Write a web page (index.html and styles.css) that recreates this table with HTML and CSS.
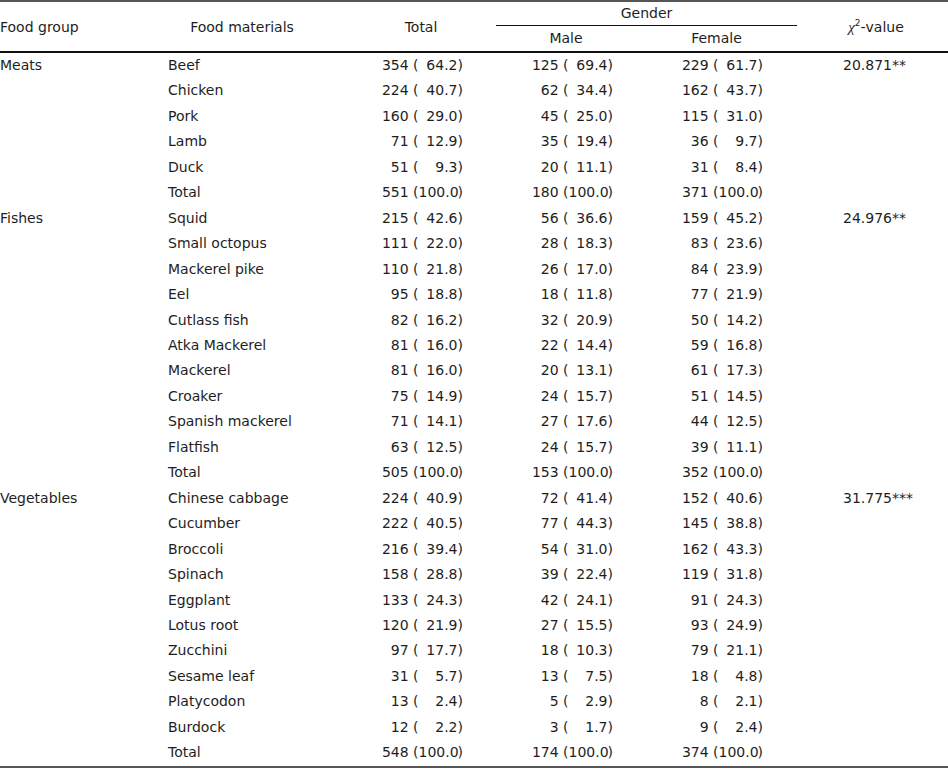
FILE: index.html
```html
<!DOCTYPE html>
<html lang="en">
<head>
<meta charset="utf-8">
<title>Food materials by gender</title>
<link rel="stylesheet" href="styles.css">
</head>
<body>
<table class="tbl">
<colgroup>
<col class="c1"><col class="c2"><col class="c3"><col class="c4"><col class="c5"><col class="c6">
</colgroup>
<thead>
<tr class="h1">
<th rowspan="2" class="h-group">Food group</th>
<th rowspan="2" class="h-mat">Food materials</th>
<th rowspan="2" class="h-total">Total</th>
<th colspan="2" class="h-gender"><div class="gender-line">Gender</div></th>
<th rowspan="2" class="h-chi"><span class="chi">χ</span><sup>2</sup>-value</th>
</tr>
<tr class="h2">
<th class="h-male">Male</th>
<th class="h-female">Female</th>
</tr>
</thead>
<tbody>
<tr><td>Meats</td><td>Beef</td><td class="v t">354 (<span class="p">64.2</span>)</td><td class="v m">125 (<span class="p">69.4</span>)</td><td class="v f">229 (<span class="p">61.7</span>)</td><td class="x">20.871**</td></tr>
<tr><td></td><td>Chicken</td><td class="v t">224 (<span class="p">40.7</span>)</td><td class="v m">62 (<span class="p">34.4</span>)</td><td class="v f">162 (<span class="p">43.7</span>)</td><td></td></tr>
<tr><td></td><td>Pork</td><td class="v t">160 (<span class="p">29.0</span>)</td><td class="v m">45 (<span class="p">25.0</span>)</td><td class="v f">115 (<span class="p">31.0</span>)</td><td></td></tr>
<tr><td></td><td>Lamb</td><td class="v t">71 (<span class="p">12.9</span>)</td><td class="v m">35 (<span class="p">19.4</span>)</td><td class="v f">36 (<span class="p">9.7</span>)</td><td></td></tr>
<tr><td></td><td>Duck</td><td class="v t">51 (<span class="p">9.3</span>)</td><td class="v m">20 (<span class="p">11.1</span>)</td><td class="v f">31 (<span class="p">8.4</span>)</td><td></td></tr>
<tr><td></td><td>Total</td><td class="v t">551 (<span class="p">100.0</span>)</td><td class="v m">180 (<span class="p">100.0</span>)</td><td class="v f">371 (<span class="p">100.0</span>)</td><td></td></tr>

<tr><td>Fishes</td><td>Squid</td><td class="v t">215 (<span class="p">42.6</span>)</td><td class="v m">56 (<span class="p">36.6</span>)</td><td class="v f">159 (<span class="p">45.2</span>)</td><td class="x">24.976**</td></tr>
<tr><td></td><td>Small octopus</td><td class="v t">111 (<span class="p">22.0</span>)</td><td class="v m">28 (<span class="p">18.3</span>)</td><td class="v f">83 (<span class="p">23.6</span>)</td><td></td></tr>
<tr><td></td><td>Mackerel pike</td><td class="v t">110 (<span class="p">21.8</span>)</td><td class="v m">26 (<span class="p">17.0</span>)</td><td class="v f">84 (<span class="p">23.9</span>)</td><td></td></tr>
<tr><td></td><td>Eel</td><td class="v t">95 (<span class="p">18.8</span>)</td><td class="v m">18 (<span class="p">11.8</span>)</td><td class="v f">77 (<span class="p">21.9</span>)</td><td></td></tr>
<tr><td></td><td>Cutlass fish</td><td class="v t">82 (<span class="p">16.2</span>)</td><td class="v m">32 (<span class="p">20.9</span>)</td><td class="v f">50 (<span class="p">14.2</span>)</td><td></td></tr>
<tr><td></td><td>Atka Mackerel</td><td class="v t">81 (<span class="p">16.0</span>)</td><td class="v m">22 (<span class="p">14.4</span>)</td><td class="v f">59 (<span class="p">16.8</span>)</td><td></td></tr>
<tr><td></td><td>Mackerel</td><td class="v t">81 (<span class="p">16.0</span>)</td><td class="v m">20 (<span class="p">13.1</span>)</td><td class="v f">61 (<span class="p">17.3</span>)</td><td></td></tr>
<tr><td></td><td>Croaker</td><td class="v t">75 (<span class="p">14.9</span>)</td><td class="v m">24 (<span class="p">15.7</span>)</td><td class="v f">51 (<span class="p">14.5</span>)</td><td></td></tr>
<tr><td></td><td>Spanish mackerel</td><td class="v t">71 (<span class="p">14.1</span>)</td><td class="v m">27 (<span class="p">17.6</span>)</td><td class="v f">44 (<span class="p">12.5</span>)</td><td></td></tr>
<tr><td></td><td>Flatfish</td><td class="v t">63 (<span class="p">12.5</span>)</td><td class="v m">24 (<span class="p">15.7</span>)</td><td class="v f">39 (<span class="p">11.1</span>)</td><td></td></tr>
<tr><td></td><td>Total</td><td class="v t">505 (<span class="p">100.0</span>)</td><td class="v m">153 (<span class="p">100.0</span>)</td><td class="v f">352 (<span class="p">100.0</span>)</td><td></td></tr>

<tr><td>Vegetables</td><td>Chinese cabbage</td><td class="v t">224 (<span class="p">40.9</span>)</td><td class="v m">72 (<span class="p">41.4</span>)</td><td class="v f">152 (<span class="p">40.6</span>)</td><td class="x">31.775***</td></tr>
<tr><td></td><td>Cucumber</td><td class="v t">222 (<span class="p">40.5</span>)</td><td class="v m">77 (<span class="p">44.3</span>)</td><td class="v f">145 (<span class="p">38.8</span>)</td><td></td></tr>
<tr><td></td><td>Broccoli</td><td class="v t">216 (<span class="p">39.4</span>)</td><td class="v m">54 (<span class="p">31.0</span>)</td><td class="v f">162 (<span class="p">43.3</span>)</td><td></td></tr>
<tr><td></td><td>Spinach</td><td class="v t">158 (<span class="p">28.8</span>)</td><td class="v m">39 (<span class="p">22.4</span>)</td><td class="v f">119 (<span class="p">31.8</span>)</td><td></td></tr>
<tr><td></td><td>Eggplant</td><td class="v t">133 (<span class="p">24.3</span>)</td><td class="v m">42 (<span class="p">24.1</span>)</td><td class="v f">91 (<span class="p">24.3</span>)</td><td></td></tr>
<tr><td></td><td>Lotus root</td><td class="v t">120 (<span class="p">21.9</span>)</td><td class="v m">27 (<span class="p">15.5</span>)</td><td class="v f">93 (<span class="p">24.9</span>)</td><td></td></tr>
<tr><td></td><td>Zucchini</td><td class="v t">97 (<span class="p">17.7</span>)</td><td class="v m">18 (<span class="p">10.3</span>)</td><td class="v f">79 (<span class="p">21.1</span>)</td><td></td></tr>
<tr><td></td><td>Sesame leaf</td><td class="v t">31 (<span class="p">5.7</span>)</td><td class="v m">13 (<span class="p">7.5</span>)</td><td class="v f">18 (<span class="p">4.8</span>)</td><td></td></tr>
<tr><td></td><td>Platycodon</td><td class="v t">13 (<span class="p">2.4</span>)</td><td class="v m">5 (<span class="p">2.9</span>)</td><td class="v f">8 (<span class="p">2.1</span>)</td><td></td></tr>
<tr><td></td><td>Burdock</td><td class="v t">12 (<span class="p">2.2</span>)</td><td class="v m">3 (<span class="p">1.7</span>)</td><td class="v f">9 (<span class="p">2.4</span>)</td><td></td></tr>
<tr class="last"><td></td><td>Total</td><td class="v t">548 (<span class="p">100.0</span>)</td><td class="v m">174 (<span class="p">100.0</span>)</td><td class="v f">374 (<span class="p">100.0</span>)</td><td></td></tr>
</tbody>
</table>
</body>
</html>
```
FILE: styles.css
```css
html, body {
  margin: 0;
  padding: 0;
  background: #fff;
}

.tbl {
  width: 948px;
  table-layout: fixed;
  border-collapse: separate;
  border-spacing: 0;
  border-top: 2px solid #555;
  font-family: "DejaVu Sans", sans-serif;
  font-size: 14px;
  color: #1e1e1e;
}

.c1 { width: 168px; }
.c2 { width: 148px; }
.c3 { width: 174px; }
.c4 { width: 152px; }
.c5 { width: 149px; }
.c6 { width: 157px; }

th, td {
  padding: 0;
  white-space: nowrap;
  font-weight: normal;
  line-height: 16px;
}

thead th {
  border-bottom: 2px solid #111;
  text-align: center;
  vertical-align: middle;
}

.h1 { height: 24px; }
.h2 { height: 27px; }

.h-group { text-align: left; }
.h-total { padding-left: 36px; }
.h-chi { padding-left: 13px; }

thead .h-gender {
  border-bottom: none;
  vertical-align: top;
}

.gender-line {
  margin: 0 -6px 0 6px;
  padding-top: 3px;
  height: 20px;
  border-bottom: 1px solid #111;
  box-sizing: content-box;
}

thead .h-male,
thead .h-female {
  vertical-align: top;
  padding-top: 4px;
}

.chi {
  font-family: "Liberation Serif", serif;
  font-style: italic;
  font-size: 15px;
}

sup {
  font-size: 9px;
  line-height: 0;
  vertical-align: 6px;
}

tbody tr { height: 25.46px; }
tbody tr.last { height: 27.46px; }

tbody td {
  vertical-align: top;
  padding-top: 4px;
}

tbody tr.last td {
  border-bottom: 2px solid #555;
}

.v { text-align: right; }
.t { padding-right: 27px; }
.m { padding-right: 29px; }
.f { padding-right: 28px; }

.p {
  display: inline-block;
  width: 39px;
  text-align: right;
}

.x { padding-left: 52px; }
```
